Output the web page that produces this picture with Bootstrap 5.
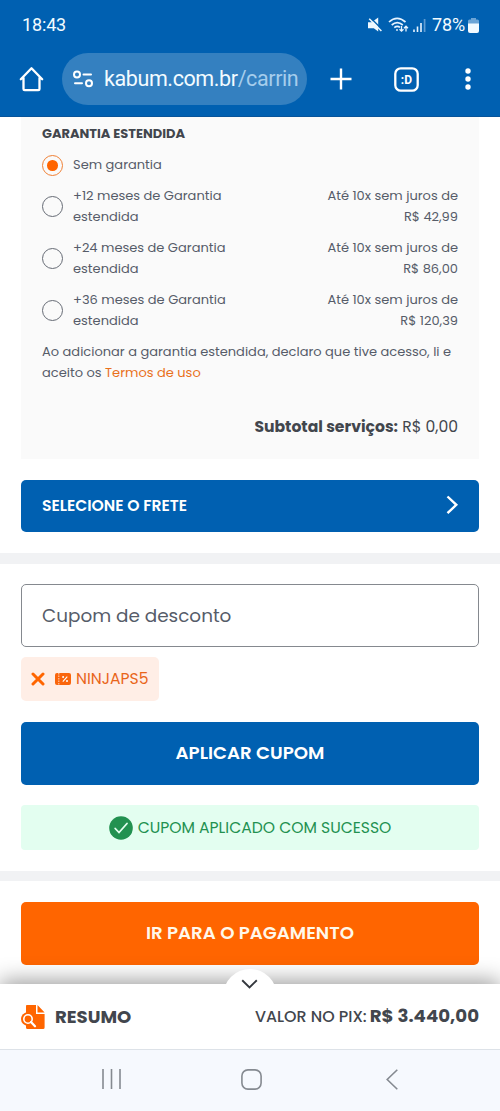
<!DOCTYPE html>
<html lang="pt-BR">
<head>
<meta charset="utf-8">
<meta name="viewport" content="width=device-width, initial-scale=1">
<title>Carrinho</title>
<link href="https://cdn.jsdelivr.net/npm/bootstrap@5.3.0/dist/css/bootstrap.min.css" rel="stylesheet">
<style>
:root{--blue:#0060b1;--orange:#ff6500;--ink:#42464d;--muted-ink:#565c69}
body{font-family:Poppins,Inter,sans-serif;font-size:13px;line-height:20.8px;color:var(--muted-ink);height:1111px;overflow:hidden;background:#fff}
svg{display:block;flex:none}
.top-bar{height:117px;background:var(--blue);color:#f2fbff;font-family:Roboto,sans-serif;border-bottom:1px solid #07549a}
.status-row{height:50px;padding:0 21px 0 22px;font-size:18px;letter-spacing:-.15px}
.browser-row{height:58px;padding-left:19px}
.address{width:245px;height:52px;border-radius:26px;background:#3480c0;margin-left:18px;padding:0 10px;font-size:21.5px;letter-spacing:-.4px;line-height:52px}
.address-text{width:194px;flex:none;overflow:hidden;white-space:nowrap;margin-left:10px}
.address-text span{color:#a5cdec}
.page-body{height:867px;overflow:hidden}
.warranty{height:342px;margin:0 21px;padding:6.6px 21px 0;background:#fafafa}
.warranty-title{font-weight:700;color:var(--ink)}
.option{margin-top:10.4px}
.option-name{width:165px;margin-left:10px}
.ring{width:21px;height:21px;border:1.2px solid #666b75;border-radius:50%;flex:none}
.ring-on{border-color:#f08034;display:grid;place-items:center}
.ring-on::after{content:"";width:10.5px;height:10.5px;border-radius:50%;background:var(--orange)}
.terms{margin-top:10.4px;white-space:nowrap}
.terms a{color:#e9711c;text-decoration:none}
.subtotal{margin-top:33px;font-size:15.6px;color:var(--ink)}
.action{border:0;border-radius:5px;color:#fff;font-weight:600;font-size:18.2px;height:63px;padding-top:4px}
.action:hover{color:#fff}
.action-blue{background:var(--blue)}
.action-orange{background:var(--orange);color:#fff8ea}
.freight{height:52px;font-size:15.6px;padding:0 20px 0 21px}
.band{height:10.5px;background:#f1f2f4}
.coupon-input{height:63px;border:1px solid #85898f;border-radius:5px;padding:0 20px;font-size:18.4px;color:var(--muted-ink)}
.coupon-input::placeholder{color:var(--muted-ink);opacity:1}
.chip{width:138px;height:44px;margin-top:10px;border-radius:5px;background:#ffeee6;color:#e9651a;font-size:15.6px;padding-left:10px}
.success{height:45px;background:#e3fef0;color:#229150;border-radius:4px;font-size:15.6px}
.chip span,.success span{padding-top:1px}
.summary{height:65px;background:#fff;color:var(--ink);padding:0 21px;box-shadow:0 -3px 22px rgba(0,0,0,.4)}
.summary-tab{width:54px;height:54px;border-radius:50%;background:#fff;left:222.5px;top:-15px}
.summary-name{font-size:18.1px;font-weight:700;margin-left:10px;padding-top:1px}
.pix{font-size:15.9px;font-weight:500;padding-top:1px}
.pix b{font-size:18.2px;margin-left:3px}
.system-nav{height:62px;background:#f6f9fe;border-top:1px solid #dde2e8;padding-bottom:3px}
</style>
</head>
<body>
<header class="top-bar">
  <div class="status-row d-flex align-items-center">
    <span>18:43</span>
    <svg class="ms-auto" width="14" height="16" viewBox="0 0 14 16"><path d="M0 5.2h3.6L10.2.6v14L5.8 11.3H0z" fill="#eef8ff"/><path d="M2.4.8 15 13.2" stroke="#0060b1" stroke-width="1.4"/><path d="M1.2 1.8 13.4 14" stroke="#eef8ff" stroke-width="1.5"/></svg>
    <svg style="margin-left:6px" width="21" height="16" viewBox="0 0 21 16" fill="none" stroke="#e6f3ff" stroke-width="1.7"><path d="M1 5Q9 -2.4 17.5 5M3.7 8Q9.2 3.3 14.8 8M6.3 10.6Q9.2 8.3 12 10.4"/><circle cx="9" cy="13" r=".9" fill="#e6f3ff" stroke="none"/><path d="M13.5 9v5M11.5 12.2l2 2 2-2M18 14.5V9.2M16 11.2l2-2 2 2" stroke-width="1.3"/></svg>
    <svg style="margin-left:4px" width="13" height="15" viewBox="0 0 13 15"><path d="M1 11.5V14M4.5 8.5V14M8 5V14" stroke="#e6f3ff" stroke-width="1.6"/><path d="M11.6 1v13" stroke="#5e9bd1" stroke-width="1.7"/></svg>
    <span style="margin-left:6px">78%</span>
    <svg style="margin-left:3px" width="11" height="15" viewBox="0 0 11 15"><path d="M3 0h5v1.5h1.5Q11 1.5 11 3v4H0V3q0-1.5 1.5-1.5H3z" fill="#6ba4d6"/><path d="M0 5.5h11V13q0 2-2 2H2q-2 0-2-2z" fill="#f2faff"/></svg>
  </div>
  <div class="browser-row d-flex align-items-center">
    <svg width="25" height="26" viewBox="0 0 25 26" fill="none" stroke="#fff" stroke-width="2.3" stroke-linejoin="round" stroke-linecap="round"><path d="M4.5 12v11q0 1.2 1.2 1.2h13.6q1.2 0 1.2-1.2V12M1.8 13.3 12.5 2.3l10.7 11"/></svg>
    <div class="address d-flex align-items-center">
      <svg width="22" height="18" viewBox="0 0 22 18" fill="none" stroke="#fff" stroke-width="2" stroke-linecap="round"><circle cx="5" cy="4.5" r="3"/><path d="M11.5 4.5H19M3 13.3h7"/><circle cx="17" cy="13.3" r="3"/></svg>
      <div class="address-text">kabum.com.br<span>/carrin</span></div>
    </div>
    <svg style="margin-left:23px" width="22" height="22" viewBox="0 0 22 22" stroke="#fff" stroke-width="2.4"><path d="M11 .5v21M.5 11h21"/></svg>
    <svg style="margin-left:42px" width="25" height="25" viewBox="0 0 25 25"><rect x="1.3" y="1.3" width="22.4" height="22.4" rx="5.5" fill="none" stroke="#fff" stroke-width="2.3"/><text x="12.4" y="16.5" text-anchor="middle" font-family="Roboto" font-weight="700" font-size="12" fill="#fff">:D</text></svg>
    <svg style="margin-left:46px" width="6" height="22" viewBox="0 0 6 22" fill="#fff"><circle cx="3" cy="3" r="2.7"/><circle cx="3" cy="11" r="2.7"/><circle cx="3" cy="19" r="2.7"/></svg>
  </div>
</header>

<main class="page-body">
  <section class="warranty">
    <div class="warranty-title">GARANTIA ESTENDIDA</div>
    <label class="option d-flex align-items-center"><span class="ring ring-on"></span><span class="option-name">Sem garantia</span></label>
    <label class="option d-flex align-items-center"><span class="ring"></span><span class="option-name">+12 meses de Garantia<br>estendida</span><span class="ms-auto text-end">Até 10x sem juros de<br>R$ 42,99</span></label>
    <label class="option d-flex align-items-center"><span class="ring"></span><span class="option-name">+24 meses de Garantia<br>estendida</span><span class="ms-auto text-end">Até 10x sem juros de<br>R$ 86,00</span></label>
    <label class="option d-flex align-items-center"><span class="ring"></span><span class="option-name">+36 meses de Garantia<br>estendida</span><span class="ms-auto text-end">Até 10x sem juros de<br>R$ 120,39</span></label>
    <p class="terms mb-0">Ao adicionar a garantia estendida, declaro que tive acesso, li e<br>aceito os <a href="#">Termos de uso</a></p>
    <div class="subtotal text-end"><b>Subtotal serviços:</b> R$ 0,00</div>
  </section>
  <div style="padding:21px">
    <button class="btn action action-blue freight w-100 d-flex align-items-center justify-content-between">SELECIONE O FRETE
      <svg style="margin-bottom:2px" width="14" height="20" viewBox="0 0 14 20" fill="none" stroke="#fff" stroke-width="2.4"><path d="m2.5 1.5 8.8 8.3-8.8 8.4"/></svg>
    </button>
  </div>
  <div class="band"></div>
  <section style="padding:20.5px 21px">
    <input class="coupon-input form-control" placeholder="Cupom de desconto">
    <div class="chip d-flex align-items-center">
      <svg width="14" height="14" viewBox="0 0 14 14" stroke="#ff6500" stroke-width="3" stroke-linecap="round"><path d="m2 2 10 10M12 2 2 12"/></svg>
      <svg style="margin:0 5px 0 10px" width="16" height="12" viewBox="0 0 16 12"><rect width="16" height="12" rx="2" fill="#fa650c"/><path d="M3.8 0v12" stroke="#ffd8c2" stroke-dasharray="1.5 1"/><path d="m7.8 8.6 4.5-5" stroke="#fff" stroke-width="1.1"/><circle cx="8.1" cy="4" r="1" fill="#fff"/><circle cx="12" cy="8.1" r="1" fill="#fff"/></svg>
      <span>NINJAPS5</span>
    </div>
    <button class="btn action action-blue w-100" style="margin-top:21px">APLICAR CUPOM</button>
    <div class="success d-flex align-items-center justify-content-center" style="margin-top:20px">
      <svg style="margin-right:5px" width="24" height="24" viewBox="0 0 24 24"><circle cx="12" cy="12" r="11.8" fill="#229150"/><path d="m6.2 12.5 3.8 4L18 7.5" fill="none" stroke="#e3fef0" stroke-width="1.8" stroke-linecap="round"/></svg>
      <span>CUPOM APLICADO COM SUCESSO</span>
    </div>
  </section>
  <div class="band"></div>
  <div style="padding:21px 21px 0">
    <button class="btn action action-orange w-100">IR PARA O PAGAMENTO</button>
  </div>
</main>

<footer class="position-relative">
  <div class="summary position-relative d-flex align-items-center">
    <div class="summary-tab position-absolute"><svg style="margin:10px auto 0" width="17" height="10" viewBox="0 0 17 10" fill="none" stroke="#33373d" stroke-width="1.9"><path d="m1.2 1.2 7.3 7.2 7.3-7.2"/></svg></div>
    <svg width="24" height="24" viewBox="0 0 24 24"><path d="M5.5 0H15v9h8.6v13.5q0 1.5-1.5 1.5H6.5Q5 24 5 22.5V1.5Q5 0 5.5 0zM16.5 0l7.1 7.5h-7.1z" fill="#ff6500"/><circle cx="6.8" cy="14" r="6.8" fill="#ff6500"/><circle cx="7" cy="14" r="4.2" fill="none" stroke="#fff" stroke-width="1.6"/><path d="m10 17 4 4.2" stroke="#fff" stroke-width="2.3" stroke-linecap="round"/></svg>
    <span class="summary-name position-relative">RESUMO</span>
    <span class="pix ms-auto position-relative">VALOR NO PIX:<b>R$ 3.440,00</b></span>
  </div>
  <nav class="system-nav d-flex align-items-center position-relative">
    <svg style="margin-left:101px" width="21" height="20" viewBox="0 0 21 20" stroke="#858a91" stroke-width="1.6"><path d="M2 0v20M10.5 0v20M19 0v20"/></svg>
    <svg style="margin-left:119px" width="21" height="21" viewBox="0 0 21 21" fill="none" stroke="#858a91" stroke-width="1.6"><rect x=".9" y=".9" width="19.2" height="19.2" rx="6"/></svg>
    <svg style="margin-left:123px" width="14" height="21" viewBox="0 0 14 21" fill="none" stroke="#858a91" stroke-width="1.6"><path d="M12.3.7 2.2 10.5l10.1 9.8"/></svg>
  </nav>
</footer>
<script src="https://cdn.jsdelivr.net/npm/bootstrap@5.3.0/dist/js/bootstrap.bundle.min.js"></script>
</body>
</html>
